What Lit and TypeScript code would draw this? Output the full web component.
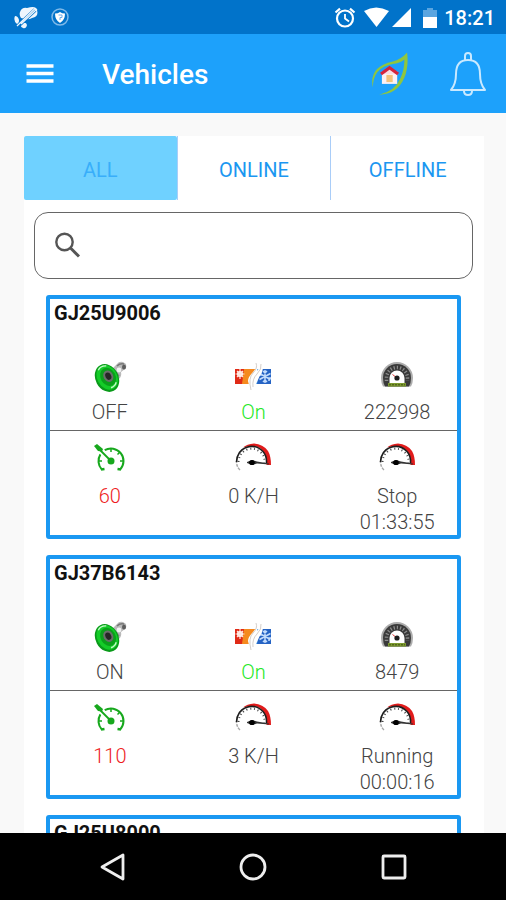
import { LitElement, html, css } from "lit";
import { customElement, property, state } from "lit/decorators.js";
import { classMap } from "lit/directives/class-map.js";

type Vehicle = {
  plate: string;
  ignition: string;
  ac: string;
  odometer: string;
  limit: string;
  speed: string;
  status: string;
  since: string;
};

const VEHICLES: Vehicle[] = [
  { plate: "GJ25U9006", ignition: "OFF", ac: "On", odometer: "222998", limit: "60", speed: "0 K/H", status: "Stop", since: "01:33:55" },
  { plate: "GJ37B6143", ignition: "ON", ac: "On", odometer: "8479", limit: "110", speed: "3 K/H", status: "Running", since: "00:00:16" },
  { plate: "GJ25U8000", ignition: "", ac: "", odometer: "", limit: "", speed: "", status: "", since: "" },
];

const polar = (cx: number, cy: number, r: number, deg: number) => {
  const a = (deg * Math.PI) / 180;
  return `${(cx + r * Math.cos(a)).toFixed(2)} ${(cy + r * Math.sin(a)).toFixed(2)}`;
};

const ignitionIcon = html`<svg width="40" height="32" viewBox="0 0 40 32" aria-hidden="true">
  <path d="M20 10L27 3Q29 0 33 1L36 3Q37 6 35 8L31 11Q32 15 29 18L24 21z" fill="#b9b9b9" />
  <path d="M27 5Q30 2 34 3" stroke="#777" stroke-width="1.500" fill="none" />
  <ellipse cx="34" cy="6" rx="2" ry="2.500" fill="#5e5e5e" />
  <circle cx="29" cy="9" r="2.400" fill="#f2f2f2" />
  <path d="M24 10L29 15" stroke="#8a8a8a" stroke-width="2" />
  <g transform="rotate(-28 17 17)">
    <ellipse cx="17" cy="17" rx="11.500" ry="14.500" fill="#0a9a1a" />
    <ellipse cx="17.500" cy="16.500" rx="10" ry="13" fill="#14cc28" />
    <ellipse cx="18.500" cy="16.500" rx="7.500" ry="9.500" fill="#0b9f1b" />
    <ellipse cx="19" cy="16" rx="4.800" ry="6" fill="#6a6f6b" />
    <ellipse cx="19" cy="16" rx="2.800" ry="3.800" fill="#262626" />
    <path d="M13 6Q17 3 22 6" stroke="#c6f9ca" stroke-width="1.300" fill="none" />
    <path d="M16 27.500Q21 28 23 25" stroke="#c6f9ca" stroke-width="1.500" fill="none" />
  </g>
</svg>`;

const acIcon = html`<svg width="40" height="32" viewBox="0 0 40 32" aria-hidden="true">
  <path d="M2 8H12V23H2z" fill="#e02a16" />
  <path d="M11 8H22L17 23H9z" fill="#f58a1f" />
  <path d="M23 8H29V23H17z" fill="#58a4e6" />
  <path d="M27 8H38V23H24z" fill="#2563c4" />
  <circle cx="7" cy="13" r="3" fill="#fff" />
  <path d="M7 8V18M2.500 13H11.500M4 10L10 16M10 10L4 16" stroke="#ffe4dc" stroke-width="1.200" />
  <path d="M32 9V22M26.500 12.500L37.500 18.500M37.500 12.500L26.500 18.500M30 10L32 12L34 10M30 21L32 19L34 21M28 11V14H26M36 20V17H38" stroke="#c3dcfb" stroke-width="1.500" fill="none" />
  <path d="M23 1Q25 6 20 11T15 20Q16 25 18 30Q22 26 24 21T29 11Q31 6 28 2Q27 7 24 10Q25 5 23 1z" fill="#fff" />
  <path d="M23 2Q25 7 20 12T18 29M28 3Q29 8 24 13T20 26" stroke="#c9c2bd" stroke-width="0.800" fill="none" />
</svg>`;

const odometerIcon = html`<svg width="40" height="32" viewBox="0 0 40 32" aria-hidden="true">
  <path d="M6 25.500Q4 22 4 17A16 16 0 0 1 36 17Q36 22 34 25.500z" fill="#adadad" />
  <path d="M8 25.500Q6 22 6 17A14 14 0 0 1 34 17Q34 22 32 25.500z" fill="#3a3a3a" />
  <path d="M9.500 20V17A10.500 10.500 0 0 1 30.500 17V20" stroke="#8d8d8d" stroke-width="3.500" stroke-dasharray="1.200 2" fill="none" />
  <path d="M12.500 22.500V17A7.500 7.500 0 0 1 27.500 17V22.500z" fill="#fff" />
  <path d="M20 17L15.500 13.500" stroke="#e63a3a" stroke-width="1" />
  <circle cx="20" cy="17" r="2.600" fill="#1c1c1c" />
  <rect x="11" y="22" width="18" height="3.500" fill="#7d9a2e" />
  <path d="M12 23.800H28" stroke="#405216" stroke-width="1" stroke-dasharray="2 1" />
</svg>`;

const limitIcon = html`<svg width="40" height="32" viewBox="0 0 40 32" aria-hidden="true">
  <g stroke="#17a81d" fill="none">
    <path d="M${polar(21, 18, 12.5, 138)}A12.500 12.500 0 0 1 ${polar(21, 18, 12.5, 212)}M${polar(21, 18, 12.5, 240)}A12.500 12.500 0 0 1 ${polar(21, 18, 12.5, 42)}" stroke-width="2" />
    <path d="M11 26.500L14.500 26M31 26.500L27.500 26" stroke-width="2.500" />
    <path d="M21 6V9M9 18H12M30 18H33M29.500 9.500L27.500 11.500" stroke-width="1.500" />
    <path d="M8 5L21 18" stroke-width="1.800" />
  </g>
  <path d="M4 3L7 1L13 6L12 8.500L8 8z" fill="#17a81d" />
  <circle cx="21" cy="18" r="3.500" fill="#17a81d" />
</svg>`;

const speedIcon = html`<svg width="40" height="32" viewBox="0 0 40 32" aria-hidden="true">
  <path d="M10 4.500Q14 1 21 0.500Q30 1 35 8Q38 13 38 22H33.500Q34 13 30 8Q26 3.500 20 3Q14 3 10 4.500z" fill="#e01b1b" />
  <path d="M7 27Q3.500 24 3.500 18" stroke="#a8a8a8" stroke-width="1.500" stroke-dasharray="3 1" fill="none" />
  <path d="M3.500 19Q4 8 13 4.500Q23 1 30 8.500Q34 13 33.500 20" stroke="#1d1d1d" stroke-width="1.600" fill="none" />
  <path d="M5.500 19Q6 10 14 6.500Q22 4 28 9.500Q32 13 31.500 20" stroke="#444" stroke-width="2" stroke-dasharray="1 2.800" fill="none" />
  <path d="M14 19L19 17L24 18.500L36 20.500V21.500L24 20.500L19 22L14 20z" fill="#333" />
  <ellipse cx="19" cy="19.500" rx="2.800" ry="2.600" fill="#000" />
</svg>`;

@customElement("vehicle-card")
class VehicleCard extends LitElement {
  @property({ attribute: false }) vehicle!: Vehicle;

  static styles = css`
    :host {
      display: block;
    }
    .card {
      border: 4px solid #1a98f2;
      border-radius: 3px;
      background: #fff;
      color: #444;
      font-size: 20px;
      line-height: 26px;
      font-weight: 300;
    }
    .plate {
      margin: 0;
      padding: 0 4px;
      font-size: 20px;
      line-height: 28px;
      font-weight: 700;
      color: #111;
    }
    .row {
      display: grid;
      grid-template-columns: 5fr 7fr 5fr;
    }
    .upper {
      padding: 34px 0 5px;
      border-bottom: 1px solid #666;
    }
    .lower {
      padding-top: 12px;
    }
    .cell {
      display: flex;
      flex-direction: column;
      align-items: center;
      gap: 6px;
      text-align: center;
    }
    .lower .cell {
      gap: 8px;
    }
    .value {
      min-height: 26px;
    }
    .on {
      color: #1fe827;
    }
    .limit {
      color: #ee1c1c;
    }
    svg {
      display: block;
    }
  `;

  render() {
    const v = this.vehicle;
    return html`<article class="card">
      <h2 class="plate">${v.plate}</h2>
      <div class="row upper">
        <div class="cell">${ignitionIcon}<span class="value">${v.ignition}</span></div>
        <div class="cell">${acIcon}<span class="value on">${v.ac}</span></div>
        <div class="cell">${odometerIcon}<span class="value">${v.odometer}</span></div>
      </div>
      <div class="row lower">
        <div class="cell">${limitIcon}<span class="value limit">${v.limit}</span></div>
        <div class="cell">${speedIcon}<span class="value">${v.speed}</span></div>
        <div class="cell">${speedIcon}<span class="value">${v.status}<br />${v.since}</span></div>
      </div>
    </article>`;
  }
}

@customElement("app-root")
class AppRoot extends LitElement {
  @state() private tab = "ALL";

  static styles = css`
    :host {
      display: flex;
      flex-direction: column;
      height: 100vh;
      background: #f9f9f9;
      font-family: Roboto, "Liberation Sans", sans-serif;
    }
    * {
      box-sizing: border-box;
    }
    button {
      border: 0;
      padding: 0;
      background: none;
      font: inherit;
      color: inherit;
    }
    svg {
      display: block;
    }
    .status {
      flex: none;
      display: flex;
      align-items: center;
      height: 34px;
      padding: 2px 11px 0 14px;
      background: #0173ca;
      color: #fff;
      font-size: 20px;
      font-weight: 500;
    }
    .notices {
      display: flex;
      gap: 12px;
      flex: 1;
    }
    .system {
      display: flex;
      align-items: center;
    }
    .bar {
      flex: none;
      display: flex;
      align-items: center;
      height: 79px;
      padding: 0 18px 0 24px;
      background: #1da1fb;
      color: #fff;
    }
    .title {
      flex: 1;
      margin: 0 0 0 46px;
      font-size: 28px;
      line-height: 32px;
      font-weight: 500;
      padding-top: 2px;
    }
    .actions {
      display: flex;
      align-items: center;
      gap: 40px;
    }
    .page {
      flex: 1;
      min-height: 0;
      display: flex;
      flex-direction: column;
      margin: 23px 22px 0 24px;
      background: #fff;
    }
    .tabs {
      flex: none;
      display: flex;
      height: 64px;
    }
    .tab {
      flex: 1;
      margin: 0;
      padding-top: 4px;
      color: #1b97f1;
      font-size: 20px;
      font-weight: 400;
    }
    .tab + .tab {
      border-left: 1px solid #a9cdf8;
    }
    .tab.active {
      background: #6fd1ff;
      border-radius: 2px;
      color: #38aefa;
    }
    .search {
      flex: none;
      display: flex;
      align-items: center;
      gap: 12px;
      height: 67px;
      margin: 12px 11px 16px 10px;
      padding: 0 16px;
      border: 1px solid #666;
      border-radius: 14px;
    }
    .query {
      flex: 1;
      min-width: 0;
      border: 0;
      outline: 0;
      background: none;
      font: inherit;
      font-size: 20px;
    }
    .list {
      flex: 1;
      min-height: 0;
      overflow-y: auto;
      scrollbar-width: none;
      display: flex;
      flex-direction: column;
      gap: 16px;
      padding: 0 23px 0 22px;
    }
    .nav {
      flex: none;
      display: flex;
      justify-content: space-between;
      align-items: center;
      height: 67px;
      padding: 0 96px;
      background: #000;
    }
  `;

  render() {
    return html`
      <div class="status">
        <div class="notices">
          <svg width="24" height="24" viewBox="0 0 24 24" aria-hidden="true">
            <path d="M6 6Q8 1 13 2Q22 -1 23 4Q25 11 18 12Q15 14 11 13L7 12Q5 9 6 6z" fill="#eef6fd" />
            <path d="M1 10Q4 10 5 14Q5 18 3 18Q-1 15 1 10zM7 18Q12 15 13 19Q12 23 9 22Q6 21 7 18z" fill="#eef6fd" />
            <path d="M4 20L21 4" stroke="#0173ca" stroke-width="4" />
            <path d="M3 20L21 2.500M7 18L23 3" stroke="#eef6fd" stroke-width="1.300" />
          </svg>
          <svg width="20" height="24" viewBox="0 0 20 24" aria-hidden="true">
            <circle cx="10" cy="11" r="8" fill="none" stroke="#7fb9e8" stroke-width="1.500" />
            <path d="M10 6Q12 7.500 15 7.500Q15 14 10 17Q5 14 5 7.500Q8 7.500 10 6z" fill="#fff" />
            <path d="M8.500 9H12V11.500H10V14" fill="none" stroke="#6cadea" />
          </svg>
        </div>
        <div class="system">
          <svg width="86" height="24" viewBox="0 0 86 24" aria-hidden="true">
            <g fill="none" stroke="#fff">
              <circle cx="11" cy="12.500" r="8" stroke-width="2.200" />
              <path d="M11 8V12.500L15 15.500" stroke-width="1.800" />
              <path d="M1.500 6.500L6 2.700M20.500 6.500L16 2.700" stroke-width="2.200" />
            </g>
            <path d="M30 5Q42 -2 55 5L42.500 21z" fill="#fff" />
            <path d="M77 2V21H58z" fill="#fff" />
          </svg>
          <svg width="24" height="24" viewBox="0 0 24 24" aria-hidden="true">
            <path d="M3 4H7V2H13V4H17V11H3z" fill="#5aa5e0" />
            <path d="M3 11H17V22H3z" fill="#fff" />
          </svg>
          <span>18:21</span>
        </div>
      </div>

      <header class="bar">
        <button aria-label="Menu">
          <svg width="32" height="32" viewBox="0 0 32 32">
            <path d="M2.500 8H29.500M2.500 15.500H29.500M2.500 23H29.500" stroke="#fff" stroke-width="3.600" />
          </svg>
        </button>
        <h1 class="title">Vehicles</h1>
        <div class="actions">
          <button aria-label="Home">
            <svg width="36" height="44" viewBox="0 0 40 48">
              <path d="M1 39Q-4 16 23 10Q32 8 39 0Q41 16 36 28Q28 47 8 47Q26 43 32 28Q36 19 36 8Q31 12 23 13Q1 17 1 39z" fill="#8fc63f" />
              <path d="M11 21H28V35H11z" fill="#fbf1f4" />
              <path d="M16 25H23V33H16z" fill="#f2c27c" />
              <path d="M10 24L19.500 17L29 24" fill="#f9dfe5" stroke="#d5243c" stroke-width="3.500" />
            </svg>
          </button>
          <button aria-label="Notifications">
            <svg width="40" height="48" viewBox="0 0 40 48">
              <g fill="none" stroke="#c9e9ff" stroke-width="2">
                <path d="M17 11V6Q17 3 20 3Q23 3 23 6V11" />
                <path d="M3 40Q8 34 8 24Q8 10 20 10Q32 10 32 24Q32 34 37 40z" stroke-linejoin="round" />
                <path d="M16 41Q16 45 20 45Q24 45 24 41" />
              </g>
            </svg>
          </button>
        </div>
      </header>

      <main class="page">
        <div class="tabs" role="tablist">
          ${["ALL", "ONLINE", "OFFLINE"].map(
            (name) => html`<button
              role="tab"
              aria-selected=${this.tab === name}
              class=${classMap({ tab: true, active: this.tab === name })}
              @click=${() => (this.tab = name)}
            >${name}</button>`
          )}
        </div>
        <label class="search">
          <svg width="32" height="32" viewBox="0 0 32 32" aria-hidden="true">
            <circle cx="13.500" cy="12" r="8.200" fill="none" stroke="#555" stroke-width="2.400" />
            <path d="M19.500 18L28 26.500" stroke="#555" stroke-width="3" />
          </svg>
          <input class="query" type="text" aria-label="Search vehicles" />
        </label>
        <div class="list">
          ${VEHICLES.map((v) => html`<vehicle-card .vehicle=${v}></vehicle-card>`)}
        </div>
      </main>

      <nav class="nav">
        <button aria-label="Back">
          <svg width="32" height="32" viewBox="0 0 32 32">
            <path d="M27 4V28L6 16z" fill="none" stroke="#eee" stroke-width="2.800" stroke-linejoin="round" />
          </svg>
        </button>
        <button aria-label="Home screen">
          <svg width="32" height="32" viewBox="0 0 32 32">
            <circle cx="16" cy="16" r="12" fill="none" stroke="#eee" stroke-width="2.800" />
          </svg>
        </button>
        <button aria-label="Recent apps">
          <svg width="32" height="32" viewBox="0 0 32 32">
            <rect x="5" y="5" width="22" height="22" rx="1" fill="none" stroke="#eee" stroke-width="2.800" />
          </svg>
        </button>
      </nav>
    `;
  }
}
